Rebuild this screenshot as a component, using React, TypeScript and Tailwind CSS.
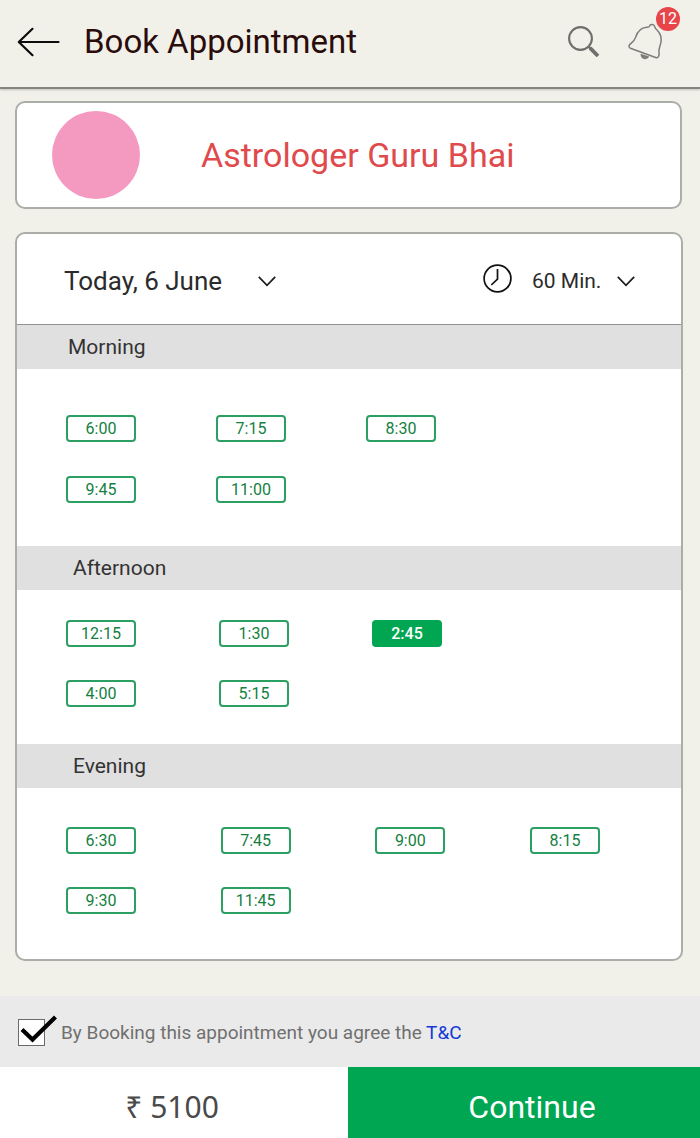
import { useState } from "react";
import clsx from "clsx";

interface SlotGroup {
  id: string;
  label: string;
  times: string[];
  titleClass: string;
  gridClass: string;
}

const slotGroups: SlotGroup[] = [
  {
    id: "morning",
    label: "Morning",
    times: ["6:00", "7:15", "8:30", "9:45", "11:00"],
    titleClass: "pl-[51px]",
    gridClass:
      "grid-cols-[repeat(3,70px)] gap-y-[34px] pt-[46px] pb-[43px] pr-[245px]",
  },
  {
    id: "afternoon",
    label: "Afternoon",
    times: ["12:15", "1:30", "2:45", "4:00", "5:15"],
    titleClass: "pl-[56px]",
    gridClass:
      "grid-cols-[repeat(3,70px)] gap-y-[33px] pt-[30px] pb-[37px] pr-[239px]",
  },
  {
    id: "evening",
    label: "Evening",
    times: ["6:30", "7:45", "9:00", "8:15", "9:30", "11:45"],
    titleClass: "pl-[56px]",
    gridClass:
      "grid-cols-[repeat(4,70px)] gap-y-[33px] pt-[39px] pb-[45px] pr-[81px]",
  },
];

const Chevron = () => (
  <svg
    className="pointer-events-none w-[18px] h-[11px]"
    viewBox="0 0 18 11"
    fill="none"
    stroke="#1a1a1a"
    strokeWidth="1.7"
  >
    <path d="M0.8 0.9 9 9.3 17.2 0.9" />
  </svg>
);

const Header = () => (
  <header className="flex items-center h-[89px] pl-[17px] pr-9 pb-1 border-b-2 border-[#85857f] shadow-[0_1px_2px_rgba(0,0,0,0.2)]">
    <button aria-label="Back" className="cursor-pointer">
      <svg
        className="w-[43px] h-[30px]"
        viewBox="0 0 43 30"
        fill="none"
        stroke="#0c0c0c"
        strokeWidth="2.2"
        strokeLinecap="round"
        strokeLinejoin="round"
      >
        <path d="M15.5 1.8 1.8 15 15.5 28.2M1.8 15H41.5" />
      </svg>
    </button>
    <h1 className="ml-6 text-[33px] leading-[40px] text-[#2a0d0a]">
      Book Appointment
    </h1>
    <div className="ml-auto flex items-center gap-7">
      <button aria-label="Search" className="cursor-pointer">
        <svg
          className="w-8 h-8"
          viewBox="0 0 32 32"
          fill="none"
          stroke="#6f6f6b"
        >
          <circle cx="12.5" cy="12.5" r="11.4" strokeWidth="2.1" />
          <path d="M20.6 20.6 23.5 23.5" strokeWidth="2.5" />
          <path d="M22.2 22.2 30 30" strokeWidth="3.8" />
        </svg>
      </button>
      <button
        aria-label="Notifications, 12 new"
        className="relative cursor-pointer"
      >
        <svg
          className="w-9 h-[38px]"
          viewBox="0 0 36 38"
          fill="none"
          stroke="#7d7d79"
          strokeWidth="1.5"
          strokeLinejoin="round"
        >
          <path d="M21.5 3.2C22.2.7 26.4 1 26.9 4.200c.2 1.2 1 1.8 2.3 3 3.8 3.700 4.700 8.200 3.500 13.200-.9 3.700-2.400 6-1.700 9.200.5 2.400-.7 5.700-2.700 5.100L2.400 25.200C.8 24.600.6 22.500 1.800 21.400c2.800-2.300 4.800-3.500 5.900-7.300C9.300 8.700 12.300 4.700 18.600 4.200c1.300-.1 2.500.1 2.900-1Z" />
          <path
            d="M12.6 30.8c-.1 3.4 2 5.6 4.700 5.400 2-.1 3.400-1.100 3.800-2.600Z"
            fill="#7d7d79"
            stroke="none"
          />
        </svg>
        <span className="absolute -top-4 -right-4 flex items-center justify-center size-6 rounded-full bg-[#e8454a] text-white text-[16px] leading-[24px]">
          12
        </span>
      </button>
    </div>
  </header>
);

export default function App() {
  const [selected, setSelected] = useState("afternoon-2:45");
  const [agreed, setAgreed] = useState(true);

  return (
    <div className="flex flex-col min-h-screen bg-[#f1f1ea] font-['Roboto',sans-serif]">
      <Header />

      <main className="flex-1 px-[15px] pt-3 pb-[34px]">
        {/* Astrologer */}
        <section className="flex items-center h-[108px] mr-[3px] pl-[35px] bg-white border-2 border-[#abada8] rounded-[10px]">
          <div className="size-[88px] shrink-0 rounded-full bg-[#f49ac1]" />
          <h2 className="ml-[61px] text-[34px] leading-[40px] text-[#e04a4c]">
            Astrologer Guru Bhai
          </h2>
        </section>

        {/* Schedule */}
        <section className="mt-[23px] mr-[2px] bg-white border-2 border-[#abada8] rounded-[10px] overflow-hidden">
          <div className="flex items-center justify-between h-[91px] pl-[47px] pr-[46px] pt-1 border-b border-[#92958f] text-[#2b2b2b]">
            <label className="relative flex items-center">
              <select
                aria-label="Date"
                className="appearance-none w-[212px] bg-transparent text-[26px] leading-[36px] cursor-pointer outline-none"
              >
                <option>Today, 6 June</option>
                <option>Tomorrow, 7 June</option>
              </select>
              <span className="absolute right-0 pointer-events-none">
                <Chevron />
              </span>
            </label>
            <div className="flex items-center gap-5">
              <svg
                className="w-[29px] h-[34px]"
                viewBox="0 0 29 34"
                fill="none"
                stroke="#111"
                strokeWidth="1.7"
              >
                <circle cx="14.5" cy="14.5" r="13.4" />
                <path d="M14.5 5v10.2L8.3 21" />
              </svg>
              <label className="relative flex items-center">
                <select
                  aria-label="Duration"
                  className="appearance-none w-[103px] bg-transparent text-[21px] leading-[36px] cursor-pointer outline-none"
                >
                  <option>60 Min.</option>
                  <option>30 Min.</option>
                </select>
                <span className="absolute right-0 pointer-events-none">
                  <Chevron />
                </span>
              </label>
            </div>
          </div>

          {slotGroups.map((group) => (
            <div key={group.id}>
              <h3
                className={clsx(
                  "h-11 bg-[#e0e0e0] text-[21px] leading-[44px] text-[#333333]",
                  group.titleClass
                )}
              >
                {group.label}
              </h3>
              <div
                className={clsx(
                  "grid justify-between pl-[49px]",
                  group.gridClass
                )}
              >
                {group.times.map((time) => {
                  const key = `${group.id}-${time}`;
                  const active = key === selected;
                  return (
                    <button
                      key={key}
                      aria-pressed={active}
                      onClick={() => setSelected(key)}
                      className={clsx(
                        "flex items-center justify-center h-[27px] border-2 rounded-[4px] text-[16px] leading-[23px] cursor-pointer",
                        active
                          ? "bg-[#00a651] border-[#00a651] text-white font-medium"
                          : "bg-white border-[#2c9f62] text-[#14803f]"
                      )}
                    >
                      {time}
                    </button>
                  );
                })}
              </div>
            </div>
          ))}
        </section>
      </main>

      <footer>
        <div className="flex items-center gap-4 h-[71px] pl-[18px] pt-[2px] bg-[#eaeaea]">
          <div className="relative size-[27px]">
            <input
              id="agree"
              type="checkbox"
              checked={agreed}
              onChange={(e) => setAgreed(e.target.checked)}
              className="block appearance-none size-[27px] bg-white border border-[#6a6a6a] cursor-pointer"
            />
            {agreed && (
              <svg
                className="absolute left-[2px] -top-1 w-[38px] h-[28px] pointer-events-none"
                viewBox="0 0 38 28"
                fill="none"
                stroke="#000"
                strokeWidth="4.2"
              >
                <path d="M2 14.5 12.5 24.5 35.5 2" />
              </svg>
            )}
          </div>
          <p className="text-[19px] leading-[28px] text-[#707070]">
            <label htmlFor="agree">
              By Booking this appointment you agree the
            </label>{" "}
            <a href="#terms" className="text-[#1238d8]">
              T&amp;C
            </a>
          </p>
        </div>
        <div className="flex h-[71px]">
          <div className="flex items-center justify-center w-[348px] pt-2 pr-1 bg-white font-['Noto_Sans',sans-serif] text-[30px] leading-[40px] text-[#4a4a4a]">
            ₹ 5100
          </div>
          <button className="flex-1 pt-2 pl-4 bg-[#00a651] text-white text-[32px] leading-[40px] cursor-pointer">
            Continue
          </button>
        </div>
      </footer>
    </div>
  );
}
